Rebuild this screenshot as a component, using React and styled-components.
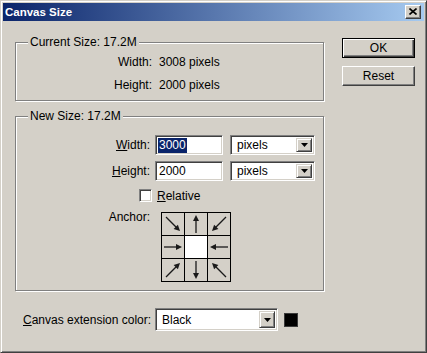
import styled, { createGlobalStyle, css } from "styled-components";

const GlobalStyle = createGlobalStyle`
  html, body {
    margin: 0;
    padding: 0;
    background: #d4d0c8;
  }
  body {
    font-family: "Liberation Sans", Arial, sans-serif;
    font-size: 12px;
    color: #000;
  }
`;

const sunken = css`
  box-sizing: border-box;
  border: 1px solid;
  border-color: #808080 #fff #fff #808080;
  box-shadow: inset 1px 1px #404040, inset -1px -1px #d4d0c8;
`;

const raised = css`
  box-sizing: border-box;
  border: 1px solid;
  border-color: #fff #404040 #404040 #fff;
  box-shadow: inset -1px -1px #808080;
  background: #d4d0c8;
`;

const Window = styled.div`
  box-sizing: border-box;
  width: 427px;
  height: 353px;
  padding: 2px;
  background: #d4d0c8;
  border: 1px solid;
  border-color: #d4d0c8 #404040 #404040 #d4d0c8;
  box-shadow: inset 1px 1px #fff, inset -1px -1px #808080;
  display: flex;
  flex-direction: column;
`;

const TitleBar = styled.div`
  height: 18px;
  display: flex;
  align-items: center;
  justify-content: space-between;
  padding: 0 3px 0 2px;
  background: linear-gradient(to right, #0a246a, #a6caf0);
`;

const Title = styled.span`
  color: #fff;
  font-weight: bold;
  font-size: 11.5px;
  line-height: 14px;
`;

const CloseButton = styled.div`
  ${raised};
  width: 16px;
  height: 14px;
  display: flex;
  align-items: center;
  justify-content: center;
  padding-bottom: 1px;
`;

const Body = styled.div`
  display: flex;
  gap: 17px;
  padding: 17px 0 0 12px;
`;

const Main = styled.div`
  width: 310px;
  padding-top: 4px;
  display: flex;
  flex-direction: column;
`;

const GroupBox = styled.section`
  box-sizing: border-box;
  width: 309px;
  height: ${(p) => p.$h}px;
  margin-top: ${(p) => p.$mt || 0}px;
  border: 1px solid #808080;
  box-shadow: inset 1px 1px #fff, 1px 1px #fff;
`;

const Caption = styled.div`
  width: fit-content;
  margin: -8px 0 0 12px;
  padding: 0 2px;
  line-height: 14px;
  background: #d4d0c8;
`;

const InfoGrid = styled.div`
  display: grid;
  grid-template-columns: 136px auto;
  column-gap: 7px;
  row-gap: 9px;
  margin-top: 6px;
  line-height: 14px;
`;

const InfoLabel = styled.span`
  text-align: right;
`;

const FieldRow = styled.div`
  display: flex;
  align-items: center;
  height: 20px;
  margin-top: ${(p) => p.$mt}px;
`;

const Label = styled.span`
  width: ${(p) => p.$w || 134}px;
  margin-right: ${(p) => (p.$gap === undefined ? 5 : p.$gap)}px;
  text-align: right;
  white-space: nowrap;
  flex-shrink: 0;
`;

const TextField = styled.div`
  ${sunken};
  width: 68px;
  height: 20px;
  background: #fff;
  padding: 0 3px;
  display: flex;
  align-items: center;
  line-height: 15px;
`;

const Selected = styled.span`
  background: #0a246a;
  color: #fff;
  padding: 0 1px;
  margin-left: -1px;
`;

const SelectBox = styled.div`
  ${sunken};
  width: ${(p) => p.$w}px;
  height: ${(p) => p.$h}px;
  margin-left: ${(p) => p.$ml || 0}px;
  background: #fff;
  display: flex;
  align-items: center;
  padding: 2px 2px 2px 6px;
`;

const SelectText = styled.span`
  flex: 1;
`;

const DropButton = styled.div`
  ${raised};
  border-color: #d4d0c8 #404040 #404040 #d4d0c8;
  box-shadow: inset 1px 1px #fff, inset -1px -1px #808080;
  width: 16px;
  height: 100%;
  display: flex;
  align-items: center;
  justify-content: center;
`;

const CheckRow = styled.label`
  display: flex;
  align-items: center;
  height: 13px;
  margin-top: 8px;
  padding-left: 123px;
`;

const CheckBox = styled.span`
  ${sunken};
  width: 13px;
  height: 13px;
  background: #fff;
  margin-right: 5px;
`;

const AnchorRow = styled.div`
  display: flex;
  align-items: flex-start;
  margin-top: 10px;
`;

const AnchorLabel = styled(Label)`
  margin-top: -2px;
  line-height: 14px;
`;

const AnchorGrid = styled.div`
  display: grid;
  grid-template-columns: repeat(3, 22px);
  grid-auto-rows: 22px;
  gap: 1px;
  padding: 1px;
  background: #000;
  margin-left: 6px;
`;

const Cell = styled.div`
  background: ${(p) => (p.$center ? "#fff" : "#d4d0c8")};
  display: flex;
  align-items: center;
  justify-content: center;
`;

const BottomRow = styled.div`
  display: flex;
  align-items: center;
  margin-top: 17px;
  padding-left: 8px;
`;

const Swatch = styled.span`
  width: 14px;
  height: 14px;
  box-sizing: border-box;
  margin-left: 6px;
  background: #000;
  border: 1px solid #3a3a3a;
`;

const ButtonColumn = styled.div`
  display: flex;
  flex-direction: column;
  gap: 8px;
`;

const PushButton = styled.div`
  ${raised};
  width: 73px;
  height: 20px;
  display: flex;
  align-items: center;
  justify-content: center;
  ${(p) =>
    p.$default &&
    css`
      border-color: #000;
      box-shadow: inset 1px 1px #fff, inset -1px -1px #404040,
        inset -2px -2px #808080;
    `}
`;

const Key = styled.u`
  text-decoration-thickness: 1px;
  text-underline-offset: 1px;
`;

const Arrow = ({ from, to }) => {
  const [x1, y1] = from;
  const [x2, y2] = to;
  const len = Math.hypot(x2 - x1, y2 - y1);
  const ux = (x2 - x1) / len;
  const uy = (y2 - y1) / len;
  const bx = x2 - ux * 6;
  const by = y2 - uy * 6;
  const nx = -uy * 3;
  const ny = ux * 3;
  const head = `${x2},${y2} ${bx + nx},${by + ny} ${bx - nx},${by - ny}`;
  return (
    <svg width="22" height="22" viewBox="0 0 22 22">
      <line x1={x1} y1={y1} x2={bx + ux} y2={by + uy} stroke="#1a1a1a" strokeWidth="1.3" />
      <polygon points={head} fill="#1a1a1a" />
    </svg>
  );
};

const anchors = [
  { from: [4, 4], to: [18, 18] },
  { from: [11, 20], to: [11, 2] },
  { from: [18, 4], to: [4, 18] },
  { from: [2, 11], to: [20, 11] },
  null,
  { from: [20, 11], to: [2, 11] },
  { from: [4, 18], to: [18, 4] },
  { from: [11, 2], to: [11, 20] },
  { from: [18, 18], to: [4, 4] },
];

const Dropdown = ({ value, w, h, ml }) => (
  <SelectBox $w={w} $h={h} $ml={ml}>
    <SelectText>{value}</SelectText>
    <DropButton>
      <svg width="7" height="4" viewBox="0 0 7 4">
        <polygon points="0,0 7,0 3.5,4" fill="#000" />
      </svg>
    </DropButton>
  </SelectBox>
);

export default function App() {
  return (
    <>
      <GlobalStyle />
      <Window>
        <TitleBar>
          <Title>Canvas Size</Title>
          <CloseButton>
            <svg width="8" height="7" viewBox="0 0 8 7">
              <path d="M0.5 0.5 L7.5 6.5 M7.5 0.5 L0.5 6.5" stroke="#000" strokeWidth="1.6" />
            </svg>
          </CloseButton>
        </TitleBar>
        <Body>
          <Main>
            <GroupBox $h={59}>
              <Caption>Current Size: 17.2M</Caption>
              <InfoGrid>
                <InfoLabel>Width:</InfoLabel>
                <span>3008 pixels</span>
                <InfoLabel>Height:</InfoLabel>
                <span>2000 pixels</span>
              </InfoGrid>
            </GroupBox>
            <GroupBox $h={175} $mt={15}>
              <Caption>New Size: 17.2M</Caption>
              <FieldRow $mt={12}>
                <Label>
                  <Key>W</Key>idth:
                </Label>
                <TextField>
                  <Selected>3000</Selected>
                </TextField>
                <Dropdown value="pixels" w={85} h={20} ml={7} />
              </FieldRow>
              <FieldRow $mt={6}>
                <Label>
                  <Key>H</Key>eight:
                </Label>
                <TextField>2000</TextField>
                <Dropdown value="pixels" w={85} h={20} ml={7} />
              </FieldRow>
              <CheckRow>
                <CheckBox />
                <span>
                  <Key>R</Key>elative
                </span>
              </CheckRow>
              <AnchorRow>
                <AnchorLabel>Anchor:</AnchorLabel>
                <AnchorGrid>
                  {anchors.map((a, i) => (
                    <Cell key={i} $center={!a}>
                      {a && <Arrow from={a.from} to={a.to} />}
                    </Cell>
                  ))}
                </AnchorGrid>
              </AnchorRow>
            </GroupBox>
            <BottomRow>
              <Label $w={128} $gap={4}>
                <Key>C</Key>anvas extension color:
              </Label>
              <Dropdown value="Black" w={123} h={23} />
              <Swatch />
            </BottomRow>
          </Main>
          <ButtonColumn>
            <PushButton $default>OK</PushButton>
            <PushButton>Reset</PushButton>
          </ButtonColumn>
        </Body>
      </Window>
    </>
  );
}
